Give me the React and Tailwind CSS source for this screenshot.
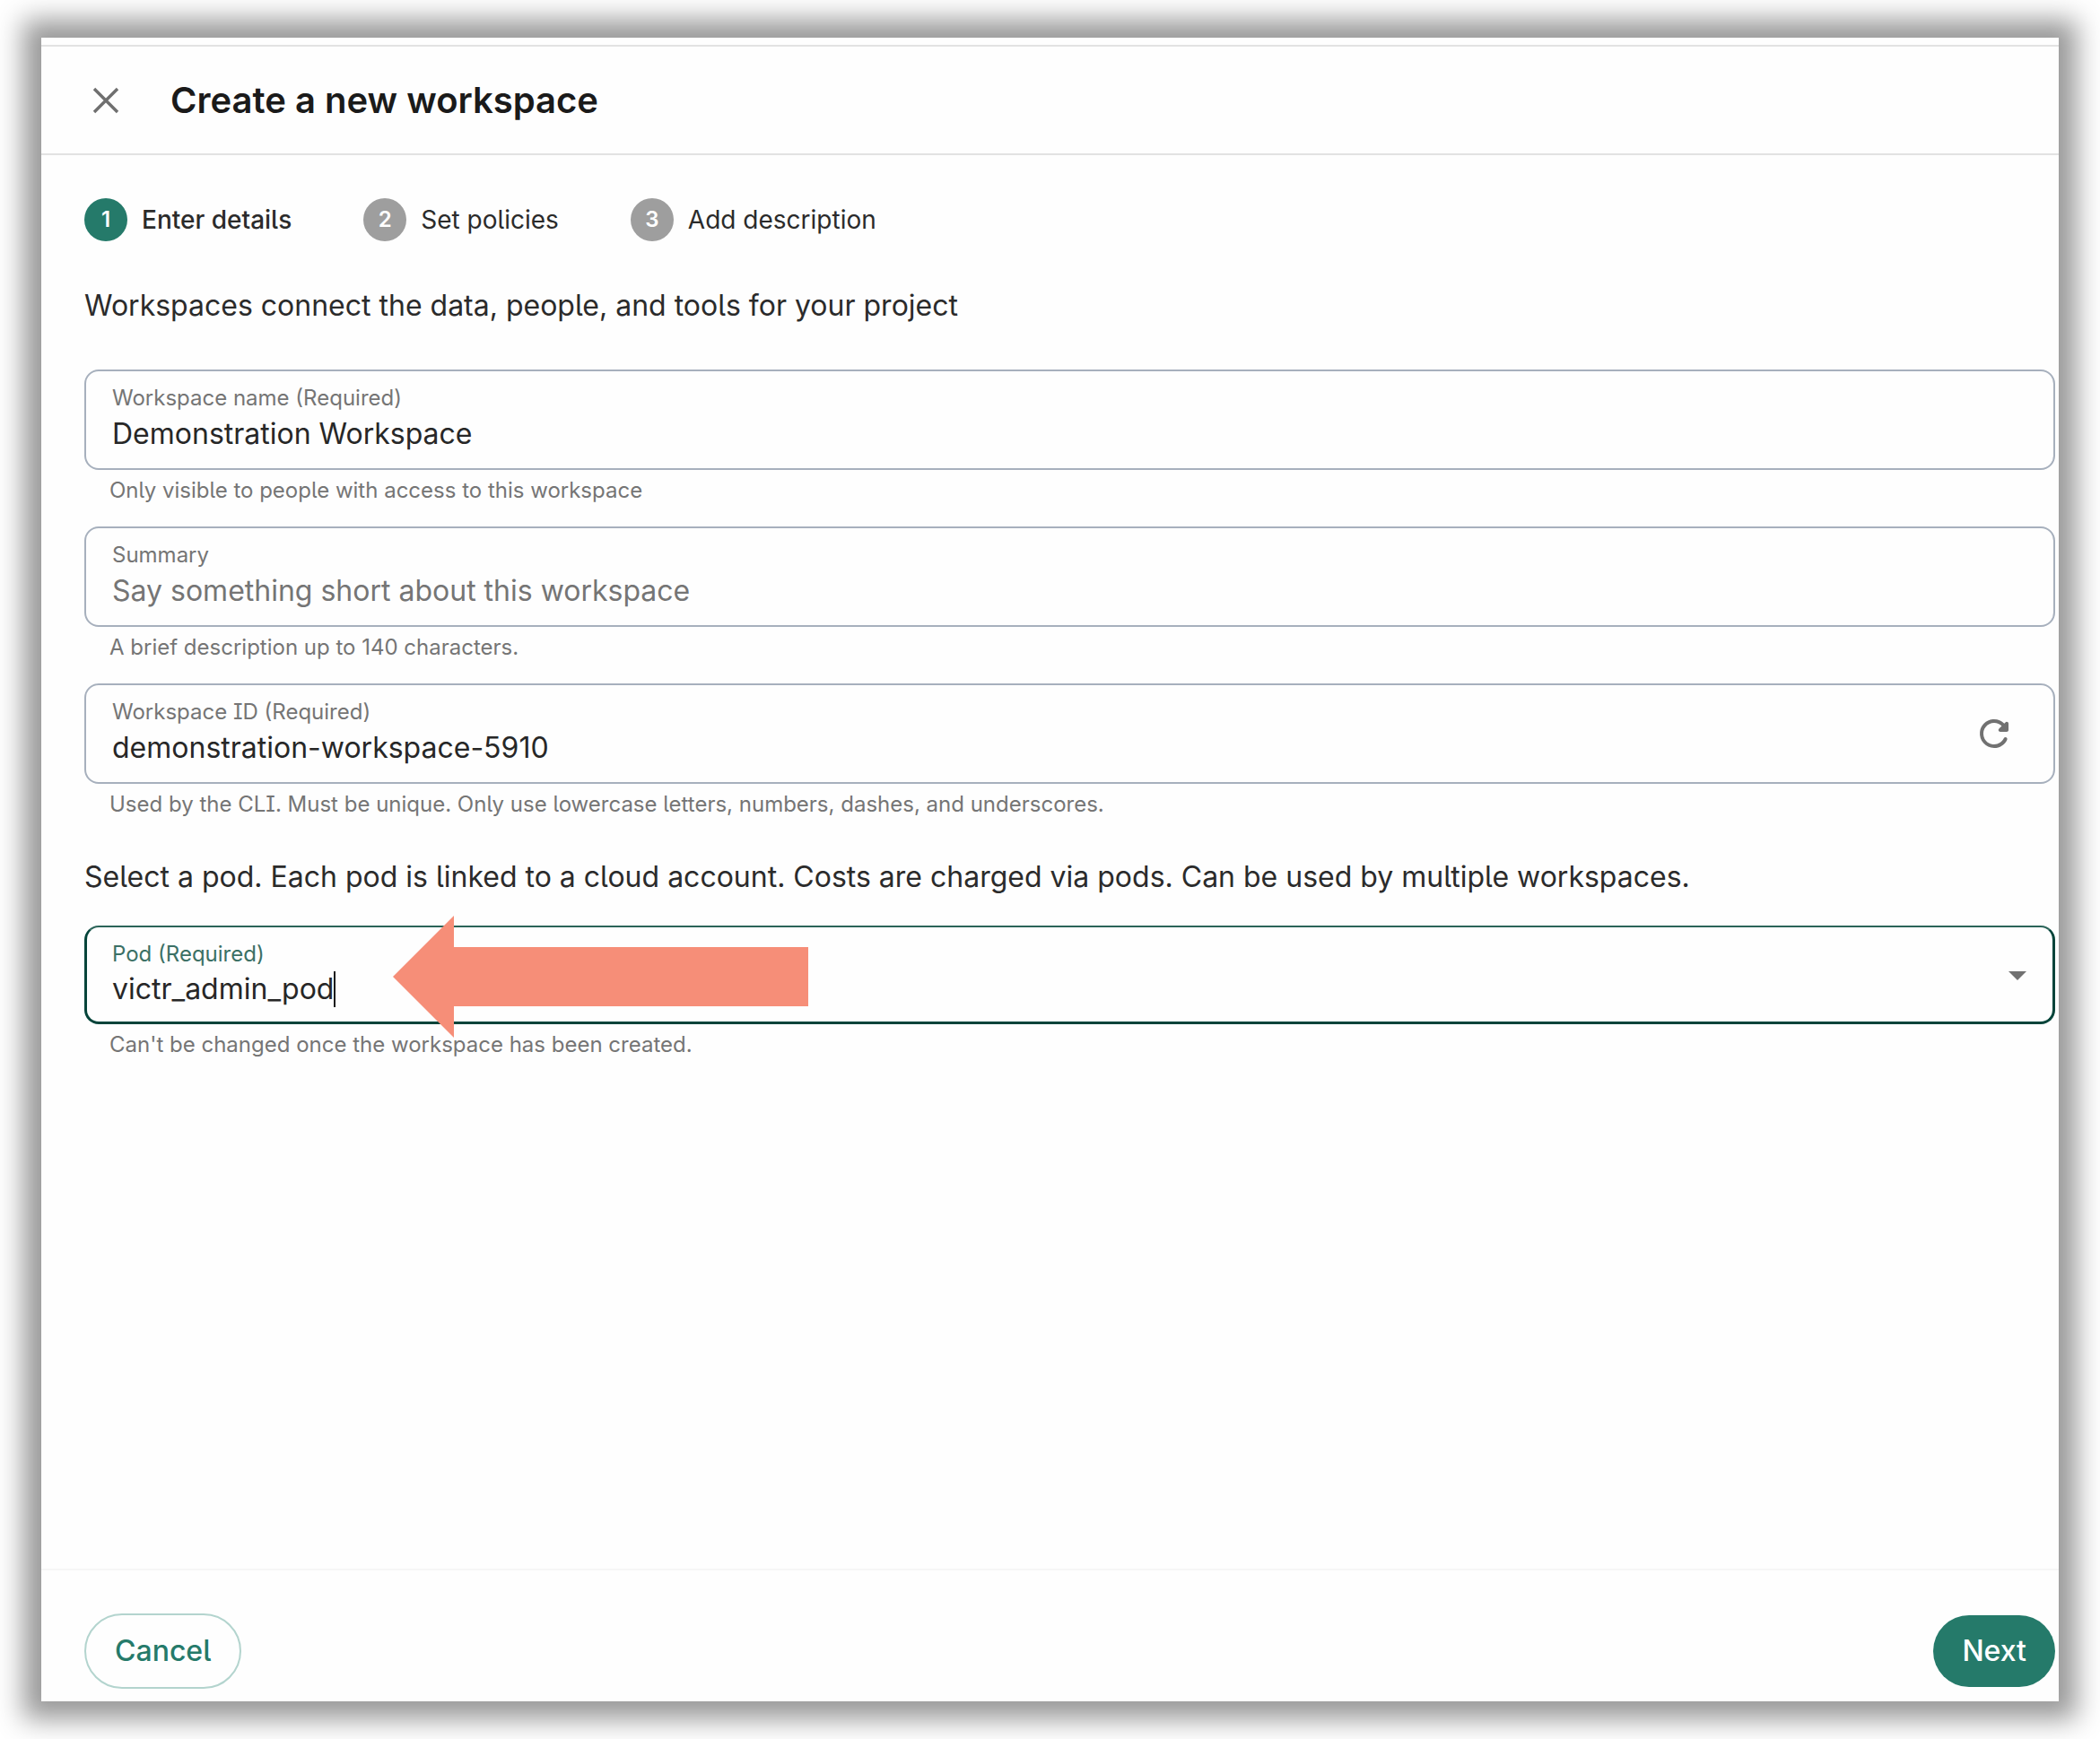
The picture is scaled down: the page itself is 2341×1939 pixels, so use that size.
const steps = [
  { label: "Enter details", active: true },
  { label: "Set policies", active: false },
  { label: "Add description", active: false },
];

function CloseIcon() {
  return (
    <svg viewBox="0 0 48 48" className="size-12" aria-hidden="true">
      <path d="M11 11 37 37M37 11 11 37" stroke="currentColor" strokeWidth="3.4" fill="none" />
    </svg>
  );
}

function RefreshIcon() {
  return (
    <svg viewBox="0 0 24 24" fill="currentColor" className="size-12" aria-hidden="true">
      <path d="M17.65 6.35c-1.63-1.63-3.94-2.57-6.48-2.31-3.67.37-6.69 3.35-7.1 7.02C3.52 15.91 7.27 20 12 20c3.19 0 5.93-1.87 7.21-4.56.32-.67-.16-1.44-.9-1.44-.37 0-.72.2-.88.53-1.13 2.43-3.84 3.97-6.8 3.31-2.22-.49-4.01-2.3-4.48-4.52C5.31 9.44 8.26 6 12 6c1.66 0 3.14.69 4.22 1.78l-1.51 1.51c-.63.63-.19 1.71.7 1.71H19c.55 0 1-.45 1-1V6.41c0-.89-1.08-1.34-1.71-.71l-.64.65z" />
    </svg>
  );
}

function DropIcon() {
  return (
    <svg viewBox="0 0 24 24" fill="currentColor" className="size-12" aria-hidden="true">
      <path d="m7 10 5 5 5-5z" />
    </svg>
  );
}

function Arrow() {
  return (
    <svg
      viewBox="0 0 463 136"
      className="pointer-events-none absolute top-[-11px] left-[344px] h-[136px] w-[463px]"
      aria-hidden="true"
    >
      <path d="M0 68 68 0V35H463V101H68V136Z" fill="#f68e78" />
    </svg>
  );
}

function Helper({ id, children }) {
  return (
    <p id={id} className="mt-[7px] pl-7 text-[24px] leading-8 text-[#757575]">
      {children}
    </p>
  );
}

function TextField({ id, label, helper, action, ...input }) {
  return (
    <div>
      <div className="flex h-28 items-center rounded-2xl border-2 border-[#a7b0bd] pr-[42px] pl-[29px]">
        <div className="flex min-w-0 flex-1 flex-col gap-1 self-start pt-3.5">
          <label htmlFor={id} className="text-[24px] leading-8 text-[#757575]">
            {label}
          </label>
          <input
            id={id}
            type="text"
            aria-describedby={id + "-help"}
            className="h-10 w-full bg-transparent text-[32px] leading-10 text-[#272727] outline-none placeholder:text-[#757575]"
            {...input}
          />
        </div>
        {action}
      </div>
      <Helper id={id + "-help"}>{helper}</Helper>
    </div>
  );
}

export default function App() {
  return (
    <div className="flex min-h-screen flex-col bg-white px-[46px] py-[42px] font-[Inter,sans-serif] text-[#2b2b2b] [font-feature-settings:'cv05','cv08']">
      <div className="flex flex-1 flex-col bg-[#fefefe] pt-2 shadow-[0_0_28px_20px_#999999]">
        <header className="flex h-[123px] items-center gap-12 border-y-2 border-[#e2e2e2] pl-12">
          <button type="button" aria-label="Close" className="text-[#6f6f6f]">
            <CloseIcon />
          </button>
          <h1 className="text-[40px] leading-12 font-semibold text-[#1a1a1a]">Create a new workspace</h1>
        </header>

        <main className="flex-1 pt-12 pr-1 pl-12">
          <ol className="flex gap-20">
            {steps.map((step, i) => (
              <li key={step.label} className="flex items-center gap-4">
                <span
                  className={
                    step.active
                      ? "flex size-12 items-center justify-center rounded-full bg-[#257a6a] text-[24px] font-semibold text-white"
                      : "flex size-12 items-center justify-center rounded-full bg-[#9e9e9e] text-[24px] font-semibold text-white"
                  }
                >
                  {i + 1}
                </span>
                <span className={step.active ? "text-[28px] leading-10 font-medium" : "text-[28px] leading-10"}>
                  {step.label}
                </span>
              </li>
            ))}
          </ol>

          <p className="mt-12 text-[32px] leading-12">
            Workspaces connect the data, people, and tools for your project
          </p>

          <div className="mt-[47px] flex flex-col gap-6">
            <TextField
              id="name"
              label="Workspace name (Required)"
              defaultValue="Demonstration Workspace"
              helper="Only visible to people with access to this workspace"
            />
            <TextField
              id="summary"
              label="Summary"
              placeholder="Say something short about this workspace"
              helper="A brief description up to 140 characters."
            />
            <TextField
              id="workspace-id"
              label="Workspace ID (Required)"
              defaultValue="demonstration-workspace-5910"
              helper="Used by the CLI. Must be unique. Only use lowercase letters, numbers, dashes, and underscores."
              action={
                <button type="button" aria-label="Generate a new ID" className="text-[#717171]">
                  <RefreshIcon />
                </button>
              }
            />
          </div>

          <p className="mt-[41px] text-[32px] leading-12">
            Select a pod. Each pod is linked to a cloud account. Costs are charged via pods. Can be used by multiple
            workspaces.
          </p>

          <div className="relative mt-[30px]">
            <div className="flex h-[110px] items-center rounded-2xl border-3 border-t-2 border-[#04443a] border-t-[#2b6459] pr-[15px] pl-7">
              <div className="flex min-w-0 flex-1 flex-col gap-[3px] self-start pt-3.5">
                <label htmlFor="pod" className="text-[24px] leading-8 text-[#3b7065]">
                  Pod (Required)
                </label>
                <div className="flex h-10 items-center">
                  <input
                    id="pod"
                    type="text"
                    role="combobox"
                    aria-expanded="false"
                    aria-describedby="pod-help"
                    defaultValue="victr_admin_pod"
                    className="h-10 bg-transparent text-[32px] leading-10 text-[#272727] outline-none [field-sizing:content]"
                  />
                  <span className="h-10 w-0.5 bg-[#1a1a1a]" />
                </div>
              </div>
              <button type="button" aria-label="Show pods" className="text-[#717171]">
                <DropIcon />
              </button>
            </div>
            <Helper id="pod-help">Can't be changed once the workspace has been created.</Helper>
            <Arrow />
          </div>
        </main>

        <footer className="flex items-center justify-between border-t-2 border-[#f6f6f6] pt-12 pr-1 pb-3.5 pl-12">
          <button
            type="button"
            className="h-[84px] rounded-full border-2 border-[#b3d4ce] px-8 text-[32px] font-medium text-[#257a6a]"
          >
            Cancel
          </button>
          <button type="button" className="h-20 rounded-full bg-[#257a6a] px-8 text-[32px] font-medium text-white">
            Next
          </button>
        </footer>
      </div>
    </div>
  );
}
